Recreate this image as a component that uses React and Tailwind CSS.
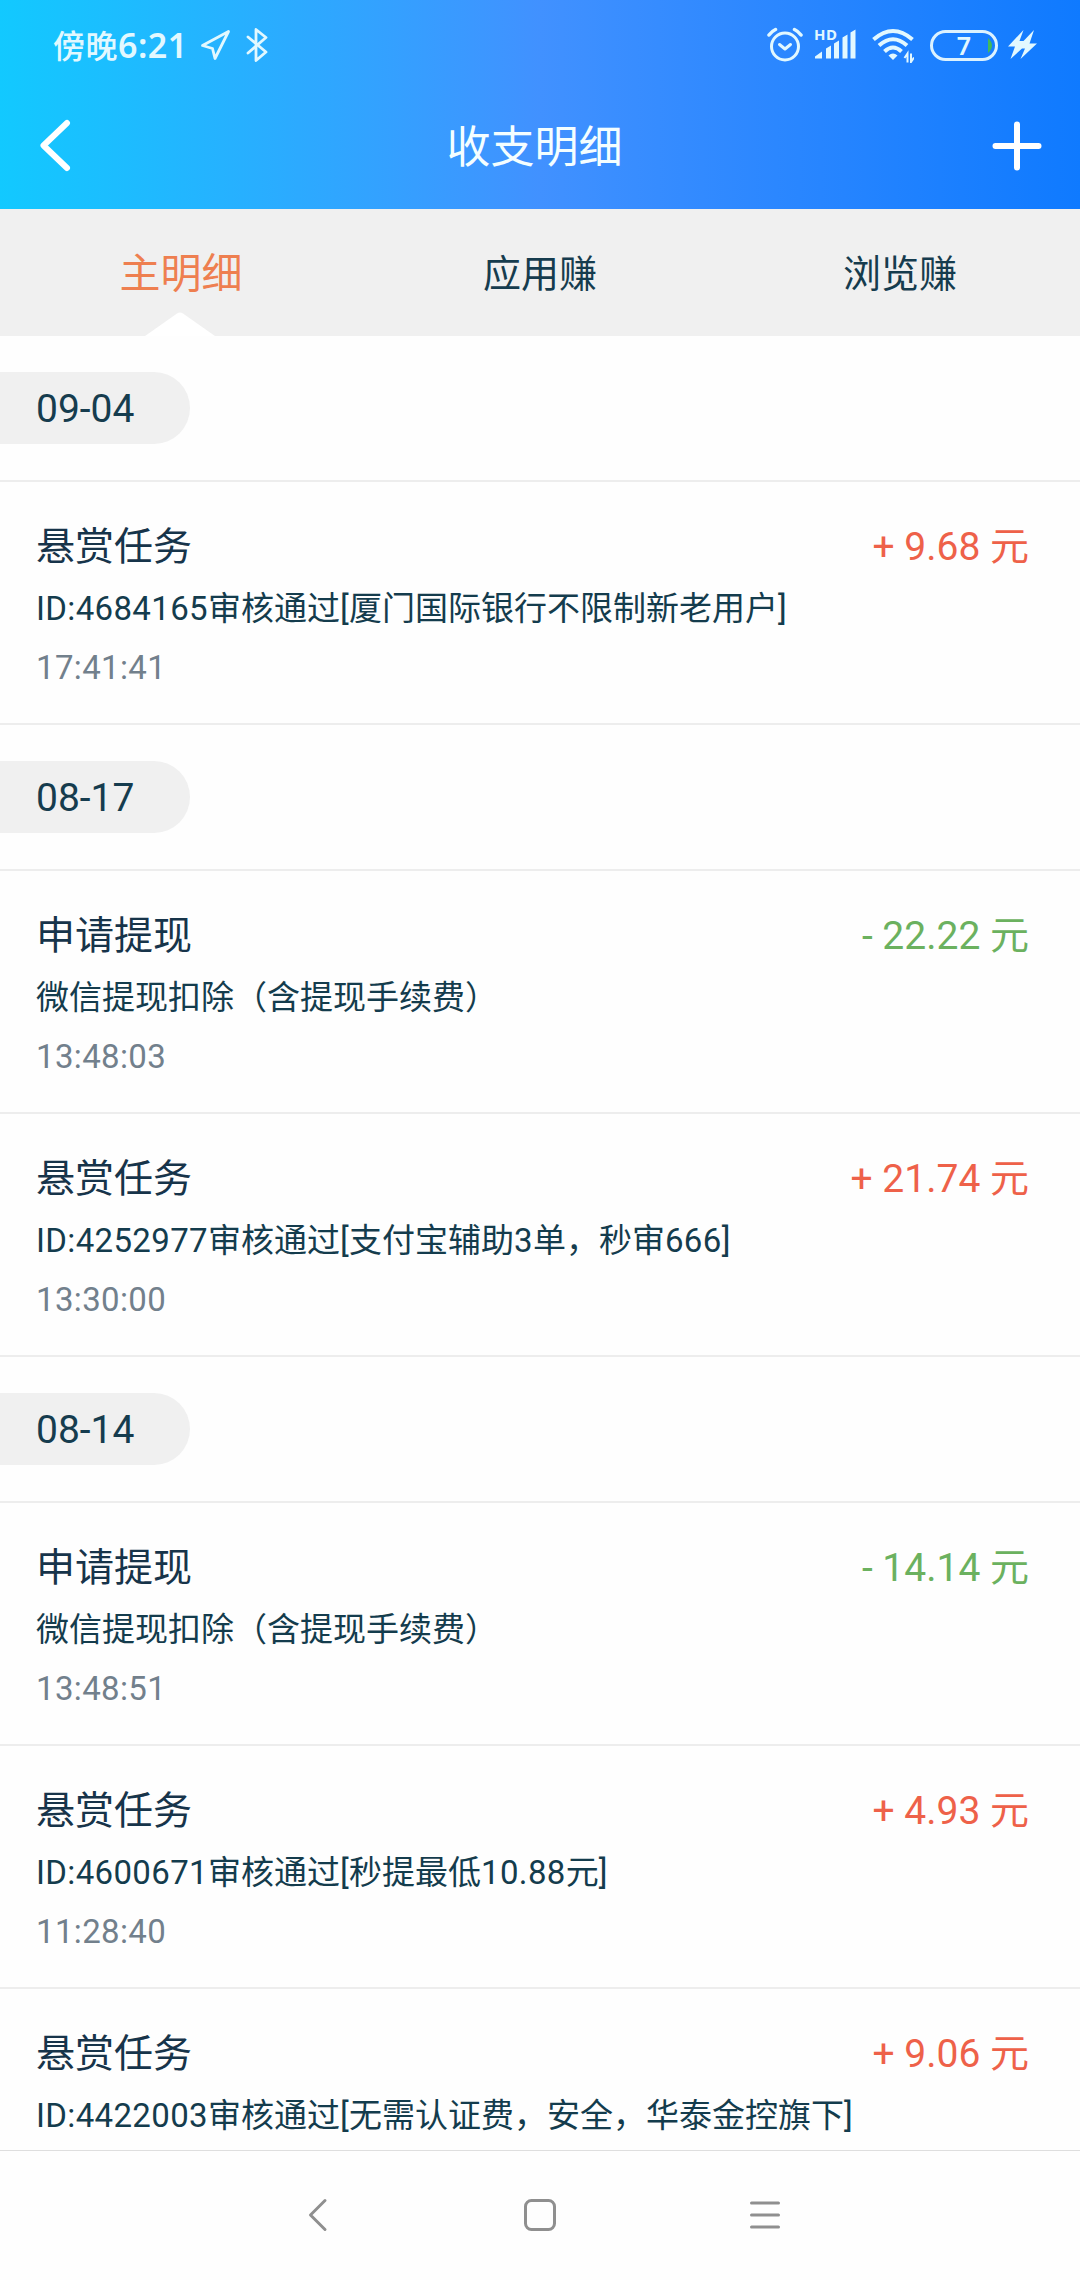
import React from "react";

const tabs = [
  { name: "主明细", active: true },
  { name: "应用赚", active: false },
  { name: "浏览赚", active: false },
];

const groups = [
  {
    date: "09-04",
    records: [
      {
        title: "悬赏任务",
        desc: "ID:4684165审核通过[厦门国际银行不限制新老用户]",
        time: "17:41:41",
        amount: "+ 9.68 元",
      },
    ],
  },
  {
    date: "08-17",
    records: [
      {
        title: "申请提现",
        desc: "微信提现扣除（含提现手续费）",
        time: "13:48:03",
        amount: "- 22.22 元",
      },
      {
        title: "悬赏任务",
        desc: "ID:4252977审核通过[支付宝辅助3单，秒审666]",
        time: "13:30:00",
        amount: "+ 21.74 元",
      },
    ],
  },
  {
    date: "08-14",
    records: [
      {
        title: "申请提现",
        desc: "微信提现扣除（含提现手续费）",
        time: "13:48:51",
        amount: "- 14.14 元",
      },
      {
        title: "悬赏任务",
        desc: "ID:4600671审核通过[秒提最低10.88元]",
        time: "11:28:40",
        amount: "+ 4.93 元",
      },
      {
        title: "悬赏任务",
        desc: "ID:4422003审核通过[无需认证费，安全，华泰金控旗下]",
        amount: "+ 9.06 元",
      },
    ],
  },
];

const StatusBar = () => (
  <div className="flex h-[90px] items-center justify-between pl-[53px] pr-[43px] text-[#e2f8ff]">
    <div className="flex items-center">
      <span className="w-[147px] whitespace-nowrap text-[32px] font-medium leading-none tracking-[0.5px]">
        傍晚<span className="font-['Noto_Sans'] text-[34px] font-semibold">6:21</span>
      </span>
      <svg className="h-[34px] w-[31px]" viewBox="0 0 31 34" fill="none" stroke="currentColor" strokeWidth="2.8" strokeLinejoin="round">
        <path d="M28.500 3.500L2.500 17.500l10 3 2.500 10z" />
      </svg>
      <svg className="ml-[15px] h-[36px] w-[22px]" viewBox="0 0 22 36" fill="none" stroke="currentColor" strokeWidth="2.8" strokeLinejoin="round" strokeLinecap="round">
        <path d="M2 10l18 15-10 8.500V2.500L20 10.500 2 26" />
      </svg>
    </div>
    <div className="flex items-center">
      <svg className="h-[36px] w-[36px]" viewBox="0 0 36 36" fill="none" stroke="currentColor" strokeWidth="3" strokeLinecap="round">
        <circle cx="18" cy="19.500" r="13.500" />
        <path d="M12.500 17.500l5.500 4.500 5.500-4.500" strokeLinejoin="round" />
        <path d="M2 8q3-4 6.500-5.500M34 8q-3-4-6.500-5.500" strokeWidth="3.500" />
      </svg>
      <svg className="ml-[11px] h-[36px] w-[42px] overflow-visible" viewBox="0 0 42 36" fill="currentColor">
        <text x="0" y="12.500" fontSize="15" fontWeight="700" fontFamily="Noto Sans" textLength="23">HD</text>
        <path d="M1 31.500v-2l7-5v7zM12 31.500V21.500l5-3v13zM20 31.500V16.500l5-3v18zM28.500 31.500V10.500l5-3v24zM36.500 31.500V5.500l5-3v29z" />
      </svg>
      <svg className="ml-[16px] h-[36px] w-[42px]" viewBox="0 0 42 36" fill="none" stroke="currentColor" strokeWidth="4">
        <path d="M1.500 12.500q19.500-17 39 0M7 18.500q14-12.500 28 0M12.500 24.500q8.500-8 17 0" />
        <path d="M16.500 28.500q4.500-4 9 0l-4.500 4.500z" fill="currentColor" stroke="none" />
        <path d="M35.500 35.500v-9l-3 4.500M39 26.500v8.500l3-4.500" strokeWidth="2" />
      </svg>
      <div className="relative ml-[16px] flex h-[31px] w-[68px] items-center justify-center rounded-full border-[3px] border-[#dcf2ff] font-['Noto_Sans'] text-[25px] font-semibold leading-none">
        7
        <svg className="absolute right-[3px] top-[5px] h-[15px] w-[4px]" viewBox="0 0 4 15">
          <path d="M0 0q8 7.500 0 15z" fill="#42b95c" />
        </svg>
      </div>
      <svg className="ml-[10px] h-[32px] w-[29px]" viewBox="0 0 29 32" fill="currentColor">
        <path d="M15.500 1L0 17.500h7L2.500 30 14 19.500h3L12.500 30 29 14.500h-7.500L26 1 15.500 12h-4z" />
      </svg>
    </div>
  </div>
);

const Header = () => (
  <header className="h-[209px] bg-[linear-gradient(90deg,#12c9ff_0%,#4191ff_50%,#0f7aff_100%)]">
    <StatusBar />
    <div className="flex h-[111px] items-center justify-between pl-[40px] pr-[38px]">
      <svg className="h-[53px] w-[50px]" viewBox="0 0 50 53" fill="none" stroke="#fff" strokeWidth="6" strokeLinecap="round" strokeLinejoin="round">
        <path d="M27 4L3.500 26.500 27 49" />
      </svg>
      <h1 className="mr-[13px] pt-[4px] text-[44px] leading-none text-[#f4feff]">收支明细</h1>
      <svg className="h-[50px] w-[50px]" viewBox="0 0 50 50" fill="none" stroke="#fff" strokeWidth="6" strokeLinecap="round">
        <path d="M25 3.500v43M3.500 25h43" />
      </svg>
    </div>
  </header>
);

const Tabs = () => (
  <nav className="grid h-[127px] grid-cols-3 bg-[#f0f0f0]">
    {tabs.map((tab) => (
      <div key={tab.name} className="relative flex items-center justify-center pt-[2px]">
        {tab.active ? (
          <>
            <span className="pl-[2px] pt-[2px] text-[41px] leading-none text-[#ee7f50]">{tab.name}</span>
            <svg className="absolute bottom-0 left-1/2 h-[24px] w-[70px] -translate-x-1/2" viewBox="0 0 70 24">
              <path d="M0 24L32 1.500q3-2 6 0L70 24z" fill="#fff" />
            </svg>
          </>
        ) : (
          <span className="text-[38px] leading-none text-[#163c4e]">{tab.name}</span>
        )}
      </div>
    ))}
  </nav>
);

const DateLabel = ({ date }) => (
  <div className="border-b-2 border-[#ededed] py-[36px]">
    <div className="flex h-[72px] w-[190px] items-center rounded-r-full bg-[#f0f0f0] pl-[36px] pt-[3px] text-[39px] leading-none text-[#163c4e]">
      {date}
    </div>
  </div>
);

// latin letters and digits are set slightly wider than the chinese text around them
const Desc = ({ text }) => (
  <div className="text-[33px] leading-[56px] text-[#143c4d]">
    {text.split(/([\x20-\x7e]+)/).map((part, i) =>
      i % 2 ? (
        <span key={i} className="tracking-[0.35px]">
          {part}
        </span>
      ) : (
        part
      )
    )}
  </div>
);

const Record = ({ record }) => {
  const income = record.amount.startsWith("+");

  return (
    <div className="flex h-[243px] justify-between border-b-2 border-[#ededed] pl-[36px] pr-[51px] pt-[37px]">
      <div className="whitespace-nowrap">
        <div className="mb-[6px] text-[39px] leading-[56px] text-[#17344a]">{record.title}</div>
        <Desc text={record.desc} />
        {record.time && (
          <div className="text-[33px] leading-[61px] tracking-[0.35px] text-[#72808c]">{record.time}</div>
        )}
      </div>
      <div className={income ? "text-[39px] leading-[56px] text-[#ee6149]" : "text-[39px] leading-[56px] text-[#6bb15f]"}>
        {record.amount}
      </div>
    </div>
  );
};

const NavBar = () => (
  <footer className="flex h-[130px] items-center justify-center gap-[190px] border-t border-[#dedede] bg-[#fefefe] pb-[2px] text-[#8f8f8f]">
    <svg className="h-[36px] w-[36px]" viewBox="0 0 36 36" fill="none" stroke="currentColor" strokeWidth="3" strokeLinecap="round" strokeLinejoin="round">
      <path d="M29 3.500L14.500 18 29 32.500" />
    </svg>
    <svg className="h-[36px] w-[36px]" viewBox="0 0 36 36" fill="none" stroke="currentColor" strokeWidth="3">
      <rect x="3.500" y="3.500" width="29" height="29" rx="6" />
    </svg>
    <svg className="h-[36px] w-[36px]" viewBox="0 0 36 36" fill="none" stroke="currentColor" strokeWidth="3" strokeLinecap="round">
      <path d="M3.500 6h27M3.500 18h27M3.500 30h27" />
    </svg>
  </footer>
);

const App = () => {
  return (
    <div className="flex h-[2280px] w-[1080px] flex-col overflow-hidden bg-[#fefefe] font-[Roboto,'Noto_Sans_CJK_SC',sans-serif]">
      <Header />
      <Tabs />
      <main className="min-h-0 flex-1 overflow-hidden">
        {groups.map((group) => (
          <section key={group.date}>
            <DateLabel date={group.date} />
            {group.records.map((record) => (
              <Record key={record.desc} record={record} />
            ))}
          </section>
        ))}
      </main>
      <NavBar />
    </div>
  );
};

export default App;
